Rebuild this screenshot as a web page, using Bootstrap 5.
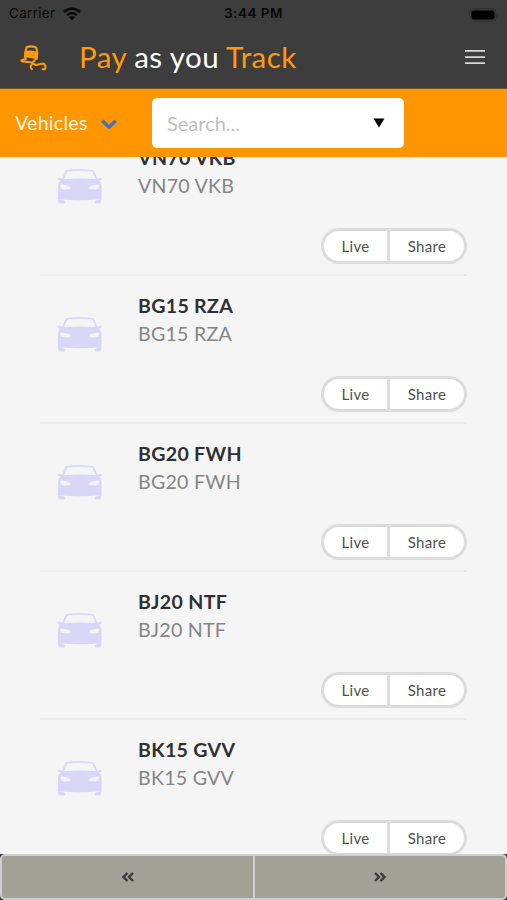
<!DOCTYPE html>
<html lang="en">
<head>
<meta charset="utf-8">
<meta name="viewport" content="width=device-width, initial-scale=1">
<title>Pay as you Track</title>
<link href="https://cdn.jsdelivr.net/npm/bootstrap@5.3.0/dist/css/bootstrap.min.css" rel="stylesheet">
<style>
body{font-family:Lato,"Open Sans",sans-serif;background:#3c3c3c;height:100vh}
.app{height:900px}
.top-zone{height:89px;background:#3d3d3d;border-bottom:1px solid #77551f}
.status{height:27px;font-family:Inter,sans-serif;font-size:13.5px;color:#080808}
.status > *{flex:1 1 0}
.status .carrier{letter-spacing:.3px;padding-left:1px}
.status .clock{font-weight:600;letter-spacing:.5px}
.brand-row{height:61px;padding:0 22px 0 19px}
.brand-title{font-size:29.5px;line-height:36px;font-weight:400;letter-spacing:.42px;color:#fff;margin-left:32px;padding-bottom:2px}
.amber{color:#ff9a0c}
.filter-bar{height:68px;background:#ff9500;padding:0 15px}
.veh-btn{width:137px;color:#fff5df;font-size:19.5px;letter-spacing:.3px}
.veh-chevron{margin-left:13.5px}
.search-box{width:252px;height:50px;border-radius:5px;padding:0 19px 0 15px;font-size:20px;color:#bfbfbf}
.vehicles{background:#f5f5f5;padding:0 40px}
.vehicle-list{margin-top:-28.5px}
.vehicle{height:147.9px;border-bottom:2px solid #ebebeb;padding:15.5px 0 10px 17px}
.car-icon{margin:24px 35px 0 0}
.plate{font-size:19.6px;line-height:28px;font-weight:700;color:#303030;letter-spacing:.3px}
.plate-sub{font-size:19.6px;line-height:28px;color:#858585;letter-spacing:.25px}
.act-group{height:36px;width:146px;border:3px solid #dcdcdc;border-radius:18px;background:#fff}
.act{font-size:15px;color:#505050;line-height:30px;letter-spacing:.3px}
.act-live{width:66px;border-right:3px solid #dcdcdc}
.pager{height:46px}
.page-btn{background:#a1a198;border:2px solid #cfcfcb;padding-left:2px}
.page-btn:first-child{border-radius:5px 0 0 5px;border-right-width:1px}
.page-btn:last-child{border-radius:0 5px 5px 0;border-left-width:1px;padding-left:0}
</style>
<script src="https://cdn.jsdelivr.net/npm/bootstrap@5.3.0/dist/js/bootstrap.bundle.min.js"></script>
</head>
<body class="overflow-hidden">
<svg width="0" height="0" class="position-absolute" aria-hidden="true">
  <symbol id="car" viewBox="0 0 46 37">
    <path fill="#d9d6f7" fill-rule="evenodd" d="M10 2Q22.500 0 35 2Q37 2.500 38 5L40.500 11Q42 9.300 45 10Q45.500 12 42 12.500Q44.500 15 44.500 20V30Q44.500 31 42 31.500Q23 33 3 31.500Q.8 31 .8 30V20Q.8 15 3.500 12.500Q0 12 .5 10Q3.500 9.300 5 11L7.500 5Q8.500 2.500 10 2ZM10.500 3.500Q9 5.500 7 11Q22.500 10 38.500 11Q36.500 5.500 35 3.500Q22.500 2 10.500 3.500ZM3.500 16.500Q3 20.500 5.500 21Q10 22 14 20.500Q13 17 3.500 16.500ZM42 16.500Q32.500 17 31.500 20.500Q35.500 22 40 21Q42.500 20.500 42 16.500Z"/>
    <path fill="#d9d6f7" d="M1.500 31L8 33L7.500 35.500H2L1 33ZM44 31L37.500 33L38 35.500H43.500L44.500 33Z"/>
  </symbol>
</svg>
<div class="app d-flex flex-column overflow-hidden">
  <header class="top-zone flex-shrink-0">
    <div class="status d-flex align-items-center px-2">
      <div class="d-flex align-items-center"><span class="carrier">Carrier</span>
        <svg class="ms-2" width="18" height="14" viewBox="0 0 18 14" fill="none" stroke="#080808" stroke-width="2.400"><path d="M1 5Q9-2 17 5M4 8.200Q9 3.800 14 8.200"/><path fill="#080808" stroke="none" d="M6 10.200Q9 7.700 12 10.200L9 13.500Z"/></svg>
      </div>
      <div class="clock text-center">3:44 PM</div>
      <div class="text-end"><svg width="30" height="14" viewBox="0 0 30 14"><rect x=".7" y=".7" width="26.500" height="12.600" rx="4" fill="none" stroke="#303030"/><rect x="2.500" y="2.500" width="23" height="9" rx="2" fill="#000"/><path d="M28.500 5Q30.500 7 28.500 9Z" fill="#282828"/></svg></div>
    </div>
    <div class="brand-row d-flex align-items-center">
      <svg width="28" height="26" viewBox="0 0 28 26" fill="none" stroke="#ff9a0c" stroke-width="2" stroke-linecap="round" stroke-linejoin="round">
        <path fill="#ff9a0c" fill-rule="evenodd" stroke="none" d="M7.500 1Q12.500-.5 17.500 1.500Q18.500 2 18.600 3.500L19.300 8L18.800 14.500L16.500 15.500L15.500 13.800L8 12.500L6.500 13.800L4.800 13L5.200 7.500L6.300 3Q6.500 1.500 7.500 1ZM8.500 3L7.800 5.700Q12.500 5 17 6.500L16.500 3.500Q12.500 2 8.500 3Z"/>
        <path d="M7 14.200L3.500 14.700Q1 15.800 3.500 16.600L11.500 17.200Q14.500 18.200 12.500 20Q10.500 22 13 24.200M15.500 15.500L13 18.200L17 20L24 18.500Q27.500 19.500 26 24.200H23.500"/>
      </svg>
      <div class="brand-title flex-grow-1 text-nowrap"><span class="amber">Pay</span> as you <span class="amber">Track</span></div>
      <svg width="20" height="16" viewBox="0 0 20 16" stroke="#d7d7d7" stroke-width="1.800"><path d="M0 .9H20M0 7.200H20M0 13.200H20"/></svg>
    </div>
  </header>
  <nav class="filter-bar d-flex align-items-center flex-shrink-0">
    <div class="veh-btn d-flex align-items-center flex-shrink-0"><span>Vehicles</span>
      <svg class="veh-chevron" width="16" height="11" viewBox="0 0 16 11" fill="none" stroke="#4573b8" stroke-width="3.500"><path d="M1.200 2.700L8 9L14.800 2.700"/></svg>
    </div>
    <div class="search-box bg-white d-flex align-items-center justify-content-between"><span>Search...</span>
      <svg width="12" height="10" viewBox="0 0 12 10"><path d="M.5 .5H11.500L6 9.500Z"/></svg>
    </div>
  </nav>
  <main class="vehicles flex-grow-1 overflow-hidden">
    <div class="vehicle-list">
      <div class="vehicle d-flex"><svg class="car-icon flex-shrink-0" width="46" height="37"><use href="#car"/></svg><div class="d-flex flex-column flex-grow-1"><div class="plate">VN70 VKB</div><div class="plate-sub">VN70 VKB</div><div class="act-group d-flex mt-auto ms-auto"><div class="act act-live text-center">Live</div><div class="act flex-grow-1 text-center">Share</div></div></div></div>
      <div class="vehicle d-flex"><svg class="car-icon flex-shrink-0" width="46" height="37"><use href="#car"/></svg><div class="d-flex flex-column flex-grow-1"><div class="plate">BG15 RZA</div><div class="plate-sub">BG15 RZA</div><div class="act-group d-flex mt-auto ms-auto"><div class="act act-live text-center">Live</div><div class="act flex-grow-1 text-center">Share</div></div></div></div>
      <div class="vehicle d-flex"><svg class="car-icon flex-shrink-0" width="46" height="37"><use href="#car"/></svg><div class="d-flex flex-column flex-grow-1"><div class="plate">BG20 FWH</div><div class="plate-sub">BG20 FWH</div><div class="act-group d-flex mt-auto ms-auto"><div class="act act-live text-center">Live</div><div class="act flex-grow-1 text-center">Share</div></div></div></div>
      <div class="vehicle d-flex"><svg class="car-icon flex-shrink-0" width="46" height="37"><use href="#car"/></svg><div class="d-flex flex-column flex-grow-1"><div class="plate">BJ20 NTF</div><div class="plate-sub">BJ20 NTF</div><div class="act-group d-flex mt-auto ms-auto"><div class="act act-live text-center">Live</div><div class="act flex-grow-1 text-center">Share</div></div></div></div>
      <div class="vehicle d-flex"><svg class="car-icon flex-shrink-0" width="46" height="37"><use href="#car"/></svg><div class="d-flex flex-column flex-grow-1"><div class="plate">BK15 GVV</div><div class="plate-sub">BK15 GVV</div><div class="act-group d-flex mt-auto ms-auto"><div class="act act-live text-center">Live</div><div class="act flex-grow-1 text-center">Share</div></div></div></div>
    </div>
  </main>
  <footer class="pager d-flex flex-shrink-0">
    <div class="page-btn w-50 d-flex align-items-center justify-content-center"><svg width="12" height="10" viewBox="0 0 12 10" fill="none" stroke="#383836" stroke-width="2.300"><path d="M5.500 1L1.500 5L5.500 9M11 1L7 5L11 9"/></svg></div>
    <div class="page-btn w-50 d-flex align-items-center justify-content-center"><svg width="12" height="10" viewBox="0 0 12 10" fill="none" stroke="#383836" stroke-width="2.300"><path d="M1 1L5 5L1 9M6.500 1L10.500 5L6.500 9"/></svg></div>
  </footer>
</div>
</body>
</html>
